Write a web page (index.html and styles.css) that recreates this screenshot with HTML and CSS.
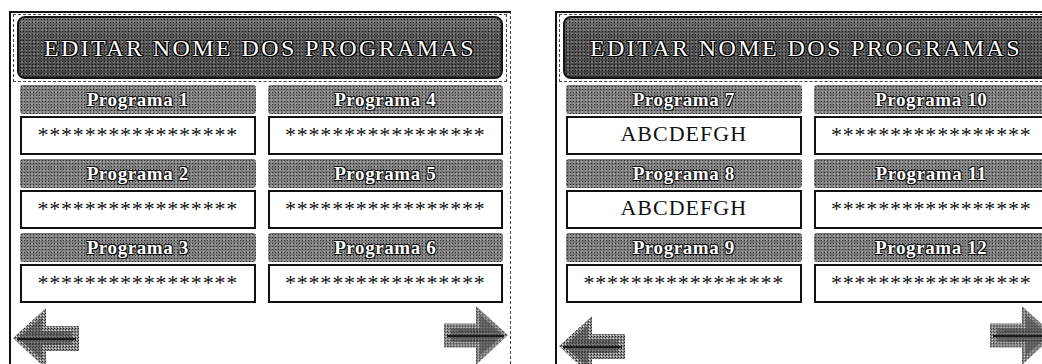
FILE: index.html
```html
<!DOCTYPE html>
<html lang="pt">
<head>
<meta charset="utf-8">
<title>Editar nome dos programas</title>
<link rel="stylesheet" href="styles.css">
</head>
<body>
<div class="screens">
  <section class="panel">
    <div class="head-wrap"><h1 class="head">EDITAR NOME DOS PROGRAMAS</h1></div>
    <div class="grid">
      <div class="item"><div class="label">Programa 1</div><div class="field stars">*****************</div></div>
      <div class="item"><div class="label">Programa 4</div><div class="field stars">*****************</div></div>
      <div class="item"><div class="label">Programa 2</div><div class="field stars">*****************</div></div>
      <div class="item"><div class="label">Programa 5</div><div class="field stars">*****************</div></div>
      <div class="item"><div class="label">Programa 3</div><div class="field stars">*****************</div></div>
      <div class="item"><div class="label">Programa 6</div><div class="field stars">*****************</div></div>
    </div>
    <div class="nav">
      <svg class="arrow left" width="68" height="62" viewBox="0 0 68 62"><use href="#arr"/></svg>
      <svg class="arrow right" width="70" height="60" viewBox="0 0 68 62"><use href="#arr" transform="translate(68 0) scale(-1 1)"/></svg>
    </div>
  </section>
  <section class="panel second">
    <div class="head-wrap"><h1 class="head">EDITAR NOME DOS PROGRAMAS</h1></div>
    <div class="grid">
      <div class="item"><div class="label">Programa 7</div><div class="field name">ABCDEFGH</div></div>
      <div class="item"><div class="label">Programa 10</div><div class="field stars">*****************</div></div>
      <div class="item"><div class="label">Programa 8</div><div class="field name">ABCDEFGH</div></div>
      <div class="item"><div class="label">Programa 11</div><div class="field stars">*****************</div></div>
      <div class="item"><div class="label">Programa 9</div><div class="field stars">*****************</div></div>
      <div class="item"><div class="label">Programa 12</div><div class="field stars">*****************</div></div>
    </div>
    <div class="nav">
      <svg class="arrow left low" width="68" height="62" viewBox="0 0 68 62"><use href="#arr"/></svg>
      <svg class="arrow right" width="70" height="60" viewBox="0 0 68 62"><use href="#arr" transform="translate(68 0) scale(-1 1)"/></svg>
    </div>
  </section>
</div>
<svg width="0" height="0" class="defs">
  <defs>
    <pattern id="dith" width="3" height="3" patternUnits="userSpaceOnUse">
      <rect width="3" height="3" fill="#8e8e8e"/>
      <rect x="0" y="0" width="1" height="1" fill="#222"/>
      <rect x="2" y="1" width="1" height="1" fill="#444"/>
      <rect x="1" y="2" width="1" height="1" fill="#ddd"/>
    </pattern>
    <g id="arr">
      <path d="M1 31 L34 1 L34 19 L67 19 L67 44 L34 44 L34 62 Z" fill="url(#dith)"/>
      <path d="M6 31 L30 10 L30 24 L60 24 L60 38 L30 38 L30 52 Z" fill="#444" opacity="0.55"/>
      <path d="M5 32 L64 32" stroke="#1a1a1a" stroke-width="2"/>
      <path d="M14 27 L52 27 M14 37 L50 37" stroke="#333" stroke-width="1" stroke-dasharray="2 1"/>
    </g>
  </defs>
</svg>
</body>
</html>
```
FILE: styles.css
```css
html, body {
  margin: 0;
  padding: 0;
  background: #fff;
  overflow: hidden;
}
body {
  width: 1042px;
  height: 364px;
  font-family: "Liberation Serif", "Times New Roman", serif;
}
.defs {
  position: absolute;
}
.screens {
  display: flex;
  gap: 44px;
  padding: 11px 0 0 9px;
}
.panel {
  width: 494px;
  height: 360px;
  flex: none;
  border-top: 2px solid #111;
  border-left: 2px solid #111;
  border-right: 1px dashed #444;
  padding: 1px 3px 0 2px;
  display: flex;
  flex-direction: column;
}
.panel.second {
  border-right: 2px solid #111;
}
.head-wrap {
  border: 1px dashed #444;
  padding: 1px 3px 2px 3px;
}
.head {
  margin: 0;
  height: 57px;
  border: 2px solid #151515;
  border-radius: 8px;
  background-color: #555;
  background-image:
    radial-gradient(circle, #111 0.7px, transparent 0.9px),
    radial-gradient(circle, #aaa 0.6px, transparent 0.8px),
    linear-gradient(#6e6e6e 0, #525252 30%, #444 100%);
  background-size: 3px 3px, 4px 4px, 100% 100%;
  background-position: 0 0, 1px 2px, 0 0;
  display: flex;
  align-items: center;
  justify-content: center;
  color: #fff;
  font-weight: normal;
  font-size: 24px;
  letter-spacing: 2.4px;
  text-shadow: 1px 1px 0 #000, -1px -1px 0 #000, 1px -1px 0 #000, -1px 1px 0 #000, 0 1px 0 #000, 1px 0 0 #000;
  padding-top: 2px;
}
.grid {
  margin: 3px 4px 0 7px;
  display: grid;
  grid-template-columns: 1fr 1fr;
  column-gap: 12px;
  row-gap: 4px;
}
.item {
  display: flex;
  flex-direction: column;
  gap: 2px;
}
.label {
  height: 29px;
  border-radius: 3px;
  background-color: #7a7a7a;
  background-image:
    radial-gradient(circle, #2a2a2a 0.7px, transparent 0.9px),
    radial-gradient(circle, #c8c8c8 0.6px, transparent 0.8px);
  background-size: 3px 3px, 4px 4px;
  background-position: 0 0, 2px 1px;
  color: #fff;
  font-weight: bold;
  font-size: 19px;
  letter-spacing: 0.6px;
  line-height: 29px;
  text-align: center;
  text-shadow: 1px 1px 0 #111, -1px -1px 0 #111, 1px -1px 0 #111, -1px 1px 0 #111;
}
.field {
  height: 35px;
  border: 2px solid #111;
  background: #fff;
  color: #111;
  text-align: center;
  white-space: nowrap;
  overflow: hidden;
}
.stars {
  font-size: 22px;
  letter-spacing: 0.8px;
  line-height: 34px;
}
.name {
  font-size: 22px;
  letter-spacing: 1px;
  line-height: 32px;
}
.nav {
  margin-top: 2px;
  display: flex;
  justify-content: space-between;
  align-items: flex-start;
}
.arrow {
  display: block;
}
.arrow.left {
  margin-left: -1px;
  margin-top: 2px;
}
.arrow.low {
  margin-top: 10px;
}
.arrow.right {
  margin-right: -4px;
}
```
